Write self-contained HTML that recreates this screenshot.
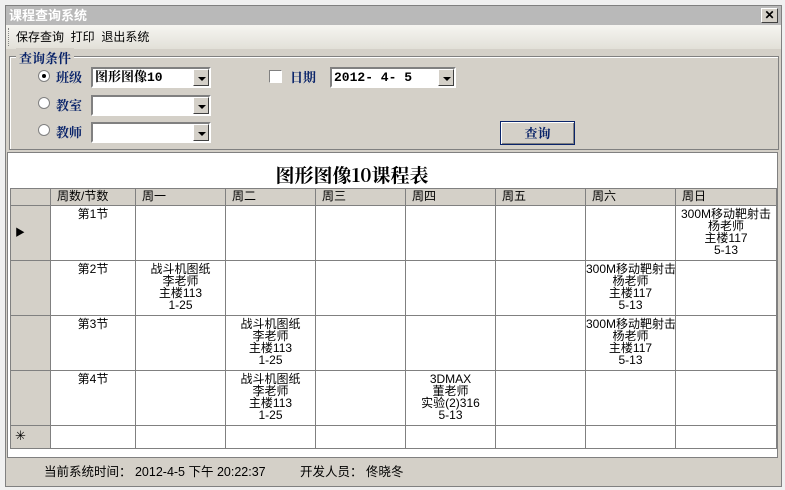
<!DOCTYPE html>
<html><head><meta charset="utf-8"><style>
*{margin:0;padding:0;box-sizing:border-box}
body{width:785px;height:490px;background:#f0f0f0;position:relative;overflow:hidden;font-family:"Liberation Sans","Noto Sans CJK SC","WenQuanYi Zen Hei",sans-serif;font-size:12px;color:#000}
.a{position:absolute}
.win{left:5px;top:5px;width:777px;height:482px;background:#d4d0c8;border:1px solid #808080}
.title{left:6px;top:6px;width:775px;height:19px;background:#b9b9b9;color:#fff;font-weight:bold;font-size:13px;padding-left:3px;line-height:19px}
.close{left:761px;top:8px;width:17px;height:15px;background:#d4d0c8;border:1px solid;border-color:#fff #404040 #404040 #fff;font-size:12px;line-height:12px;text-align:center;font-weight:bold}
.menu{left:6px;top:25px;width:775px;height:24px;background:linear-gradient(#f6f5f1,#e2e0d8);line-height:24px;padding-left:10px;font-size:12px}
.grp{left:9px;top:56px;width:770px;height:94px;border:1px solid #808080;box-shadow:inset 1px 1px 0 #fff}
.lbl{color:#0a246a;font-weight:bold;font-size:13px;font-family:"Noto Serif CJK SC","Liberation Serif",serif}
.combo{background:#fff;border:2px solid;border-color:#808080 #fff #fff #808080;height:21px}
.dd{position:absolute;right:0;top:0;width:16px;height:17px;background:#d4d0c8;border:1px solid;border-color:#fff #404040 #404040 #fff}
.dd:after{content:"";position:absolute;left:4px;top:7px;border-left:4px solid transparent;border-right:4px solid transparent;border-top:4px solid #000}
.radio{width:12px;height:12px;border-radius:50%;background:#fff;border:1px solid #808080}
.ctext{font-weight:bold;font-size:13px;line-height:17px;padding-left:2px;font-family:"Liberation Mono","Noto Serif CJK SC",monospace}
.panel{left:7px;top:152px;width:771px;height:306px;background:#fff;border:1px solid #808080}
table{border-collapse:collapse;table-layout:fixed;position:absolute;left:10px;top:188px;width:766px}
td{border:1px solid #808080;vertical-align:top;text-align:center;font-size:12px;line-height:12px;padding-top:2px;white-space:nowrap;overflow:hidden}
tr.h td{background:#d4d0c8;text-align:left;padding-left:6px;height:17px;padding-top:1px;font-size:12px}
td.rh{background:#d4d0c8}
.status{left:6px;top:460px;width:775px;height:24px;line-height:24px;font-size:12.5px}
</style></head><body>
<div class="a win"></div>
<div class="a title">课程查询系统</div>
<div class="a close">✕</div>
<div class="a menu">保存查询&nbsp; 打印&nbsp; 退出系统</div>
<div class="a" style="left:8px;top:28px;width:2px;height:18px;border-left:1px dotted #888"></div>
<div class="a grp"></div>
<div class="a lbl" style="left:16px;top:48px;background:#d4d0c8;padding:0 3px">查询条件</div>

<div class="a radio" style="left:38px;top:70px"></div><div class="a" style="left:42px;top:74px;width:4px;height:4px;background:#000;border-radius:50%"></div>
<div class="a lbl" style="left:56px;top:67px">班级</div>
<div class="a combo" style="left:91px;top:67px;width:120px"><div class="ctext">图形图像10</div><div class="dd"></div></div>

<div class="a radio" style="left:38px;top:97px"></div>
<div class="a lbl" style="left:56px;top:95px">教室</div>
<div class="a combo" style="left:91px;top:95px;width:120px"><div class="dd"></div></div>

<div class="a radio" style="left:38px;top:124px"></div>
<div class="a lbl" style="left:56px;top:122px">教师</div>
<div class="a combo" style="left:91px;top:122px;width:120px"><div class="dd"></div></div>

<div class="a" style="left:269px;top:70px;width:13px;height:13px;background:#fff;border:1px solid;border-color:#808080 #fff #fff #808080"></div>
<div class="a lbl" style="left:290px;top:67px">日期</div>
<div class="a combo" style="left:330px;top:67px;width:126px"><div class="ctext">2012- 4- 5</div><div class="dd"></div></div>

<div class="a" style="left:500px;top:121px;width:75px;height:24px;border:1px solid #0a246a;background:#d4d0c8;box-shadow:inset 1px 1px 0 #fff,inset -1px -1px 0 #808080;text-align:center;line-height:22px"><span class="lbl">查询</span></div>

<div class="a panel"></div>
<div class="a" style="left:7px;top:161px;width:690px;text-align:center;font-weight:bold;font-size:19px;font-family:'Noto Serif CJK SC','Liberation Serif',serif">图形图像10课程表</div>

<table>
<colgroup><col style="width:40px"><col style="width:85px"><col style="width:90px"><col style="width:90px"><col style="width:90px"><col style="width:90px"><col style="width:90px"><col style="width:90px"><col style="width:101px"></colgroup>
<tr class="h"><td></td><td>周数/节数</td><td>周一</td><td>周二</td><td>周三</td><td>周四</td><td>周五</td><td>周六</td><td>周日</td></tr>
<tr style="height:55px"><td class="rh" style="text-align:left;padding:22px 0 0 4px;font-size:10px">▶</td><td>第1节</td><td></td><td></td><td></td><td></td><td></td><td></td><td>300M移动靶射击<br>杨老师<br>主楼117<br>5-13</td></tr>
<tr style="height:55px"><td class="rh"></td><td>第2节</td><td>战斗机图纸<br>李老师<br>主楼113<br>1-25</td><td></td><td></td><td></td><td></td><td>300M移动靶射击<br>杨老师<br>主楼117<br>5-13</td><td></td></tr>
<tr style="height:55px"><td class="rh"></td><td>第3节</td><td></td><td>战斗机图纸<br>李老师<br>主楼113<br>1-25</td><td></td><td></td><td></td><td>300M移动靶射击<br>杨老师<br>主楼117<br>5-13</td><td></td></tr>
<tr style="height:55px"><td class="rh"></td><td>第4节</td><td></td><td>战斗机图纸<br>李老师<br>主楼113<br>1-25</td><td></td><td>3DMAX<br>董老师<br>实验(2)316<br>5-13</td><td></td><td></td><td></td></tr>
<tr style="height:23px"><td class="rh" style="text-align:left;padding:4px 0 0 4px;font-size:13px">✳</td><td></td><td></td><td></td><td></td><td></td><td></td><td></td><td></td></tr>
</table>

<div class="a status"><span style="position:absolute;left:38px">当前系统时间： 2012-4-5 下午 20:22:37</span><span style="position:absolute;left:294px">开发人员： 佟晓冬</span></div>
</body></html>
